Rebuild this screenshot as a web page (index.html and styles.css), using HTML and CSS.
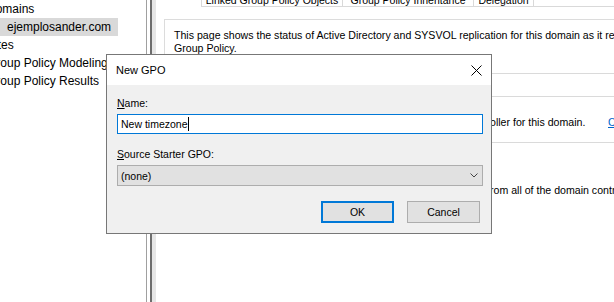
FILE: index.html
```html
<!DOCTYPE html>
<html lang="en">
<head>
    <meta charset="UTF-8">
    <meta name="viewport" content="width=device-width, initial-scale=1.0">
    <title>Group Policy Management - New GPO</title>
    <link rel="stylesheet" href="styles.css">
</head>
<body>
    <div class="window">
        <div class="tree-pane">
            <ul class="tree">
                <li class="node">Domains</li>
                <li class="node child"><span class="selected">ejemplosander.com</span></li>
                <li class="node">Sites</li>
                <li class="node">Group Policy Modeling</li>
                <li class="node">Group Policy Results</li>
            </ul>
        </div>
        <div class="splitter"></div>
        <div class="details">
            <div class="tabs">
                <div class="tab tab-linked">Linked Group Policy Objects</div>
                <div class="tab tab-inherit">Group Policy Inheritance</div>
                <div class="tab tab-deleg">Delegation</div>
                <div class="tab-fill"></div>
            </div>
            <div class="panel">
                <p class="intro">This page shows the status of Active Directory and SYSVOL replication for this domain as it relates to<br>Group Policy.</p>
                <div class="section sec-head"></div>
                <div class="section sec-sub"></div>
                <div class="section sec-baseline">
                    <span class="lead">The baseline domain contr</span><span class="detail">oller for this domain.</span><a href="#" class="change">Change</a>
                </div>
                <div class="section sec-status">
                    <span class="lead">Status was gathered f</span>rom all of the domain controllers in this domain.
                </div>
            </div>
        </div>
    </div>

    <div class="dialog">
        <div class="dialog-title">
            <span>New GPO</span>
            <svg class="close" width="11" height="11" viewBox="0 0 11 11">
                <path d="M0.5 0.5 L10.5 10.5 M10.5 0.5 L0.5 10.5" stroke="#000" stroke-width="1" fill="none"/>
            </svg>
        </div>
        <div class="dialog-body">
            <div class="label"><u>N</u>ame:</div>
            <div class="textbox">New timezone<span class="caret"></span></div>
            <div class="label label-source"><u>S</u>ource Starter GPO:</div>
            <div class="combo">
                <span>(none)</span>
                <svg width="8" height="5" viewBox="0 0 8 5">
                    <path d="M0.5 0.5 L4 4 L7.5 0.5" stroke="#444" stroke-width="1" fill="none"/>
                </svg>
            </div>
            <div class="buttons">
                <button class="btn btn-ok">OK</button>
                <button class="btn">Cancel</button>
            </div>
        </div>
    </div>
</body>
</html>
```

FILE: styles.css
```css
* {
    margin: 0;
    padding: 0;
    box-sizing: border-box;
}
body {
    width: 614px;
    height: 302px;
    overflow: hidden;
    background: #fff;
    color: #000;
    font-family: "Liberation Sans", Arial, sans-serif;
}
.window {
    display: flex;
    width: 614px;
    height: 302px;
    overflow: hidden;
}

/* tree on the left */
.tree-pane {
    width: 146px;
    flex: none;
    overflow: hidden;
}
.tree {
    list-style: none;
    margin-left: -13px;
    font-size: 12px;
}
.node {
    height: 18px;
    line-height: 18px;
    white-space: nowrap;
}
.child {
    padding-left: 13px;
}
.selected {
    display: inline-block;
    padding: 0 7px;
    background: #d9d9d9;
}
.splitter {
    width: 10px;
    flex: none;
    border-left: 1px solid #a0a0a0;
    background: linear-gradient(to right, #fff 0 3px, #6d6d6d 3px 5px, #e6e6e6 5px 9px);
}

/* details on the right */
.details {
    flex: 1;
    min-width: 0;
    padding-left: 8px;
    overflow: hidden;
}
.tabs {
    display: flex;
    height: 15px;
    margin-top: -8px;
    padding-left: 37px;
    font-size: 10.5px;
}
.tab {
    height: 15px;
    border: 1px solid #d9d9d9;
    border-left: none;
    line-height: 12px;
    padding-top: 1px;
    text-align: center;
    white-space: nowrap;
    overflow: hidden;
}
.tab-linked {
    width: 142px;
    border-left: 1px solid #d9d9d9;
}
.tab-inherit {
    width: 131px;
}
.tab-deleg {
    width: 60px;
}
.tab-fill {
    flex: 1;
    border-bottom: 1px solid #d9d9d9;
}
.panel {
    margin-top: 12px;
    border-top: 1px solid #dcdcdc;
    border-left: 1px solid #dcdcdc;
    padding: 9px 0 0 9px;
    font-size: 10.6px;
    line-height: 13px;
    white-space: nowrap;
}
.section {
    border-bottom: 1px solid #dadada;
}
.sec-head {
    height: 19px;
}
.sec-sub {
    height: 23px;
}
.sec-baseline {
    display: flex;
    padding: 19px 0 13px;
}
.sec-status {
    border-bottom: none;
    padding-top: 41px;
}
.lead {
    display: inline-block;
    flex: none;
    width: 316px;
    overflow: hidden;
    vertical-align: top;
}
.detail {
    width: 118px;
    flex: none;
}
.change {
    flex: none;
    color: #0066cc;
}

/* New GPO dialog */
.dialog {
    position: absolute;
    left: 106px;
    top: 54px;
    width: 386px;
    height: 180px;
    border: 1px solid #777;
    background: #f0f0f0;
    font-size: 10.5px;
    display: flex;
    flex-direction: column;
}
.dialog-title {
    height: 30px;
    background: #fff;
    display: flex;
    align-items: center;
    justify-content: space-between;
    padding: 0 9px 0 9px;
    font-size: 11px;
}
.close {
    display: block;
}
.dialog-body {
    flex: 1;
    padding: 12px 8px 0 10px;
}
.label {
    line-height: 13px;
}
.label-source {
    margin-top: 14px;
}
.textbox {
    margin-top: 4px;
    height: 20px;
    width: 366px;
    border: 1px solid #0078d7;
    background: #fff;
    display: flex;
    align-items: center;
    padding-left: 3px;
}
.caret {
    display: inline-block;
    width: 1px;
    height: 14px;
    background: #000;
}
.combo {
    margin-top: 4px;
    height: 21px;
    width: 366px;
    border: 1px solid #adadad;
    background: #e1e1e1;
    display: flex;
    align-items: center;
    justify-content: space-between;
    padding: 0 4px 0 3px;
}
.combo svg {
    display: block;
}
.buttons {
    margin-top: 15px;
    display: flex;
    justify-content: flex-end;
    gap: 13px;
    padding-right: 3px;
}
.btn {
    width: 73px;
    height: 22px;
    border: 1px solid #adadad;
    background: #e1e1e1;
    font-family: inherit;
    font-size: 10.5px;
    color: #000;
}
.btn-ok {
    border: 2px solid #0078d7;
}
```
